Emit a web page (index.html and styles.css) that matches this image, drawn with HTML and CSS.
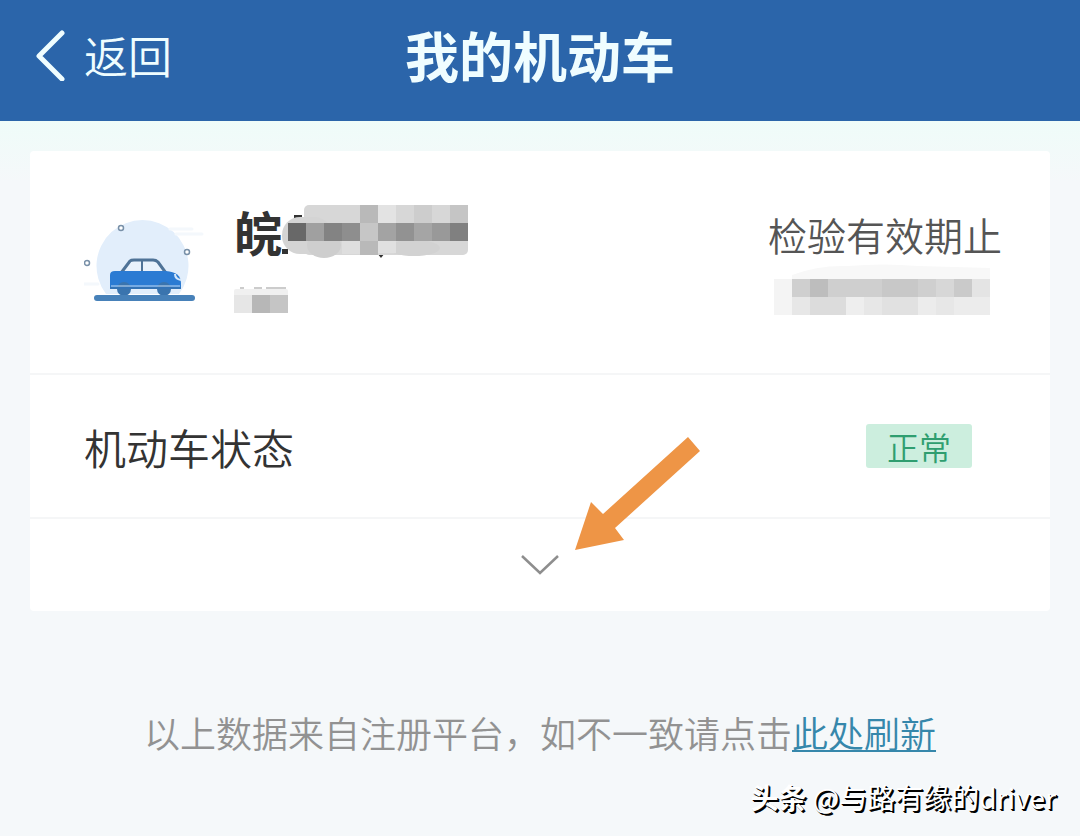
FILE: index.html
```html
<!DOCTYPE html>
<html lang="zh-CN">
<head>
  <meta charset="UTF-8" />
  <meta name="viewport" content="width=device-width, initial-scale=1" />
  <title>我的机动车</title>
  <link rel="stylesheet" href="styles.css">
</head>
<body>
  <header class="topbar">
    <a href="#" class="back">
      <svg class="back-icon" viewBox="0 0 32 52" aria-hidden="true">
        <path d="M28 4 L5 27 L28 50" fill="none" stroke="currentColor" stroke-width="5" stroke-linecap="round" stroke-linejoin="round" />
      </svg>
      <span>返回</span>
    </a>
    <h1 class="title">我的机动车</h1>
  </header>

  <main class="content">
    <section class="card" aria-label="机动车信息">
      <div class="vehicle">
        <svg class="car" viewBox="0 0 120 90" aria-hidden="true">
          <path d="M22 77 A46 46 0 1 1 95 77 Z" fill="#e2eefb" />
          <path d="M86 12 H108 M92 17 H118 M0 67 H14" stroke="#f4f8fc" stroke-width="3" stroke-linecap="round" />
          <g fill="#fff" stroke="#7890a8" stroke-width="1.5">
            <circle cx="37" cy="11" r="2.5" />
            <circle cx="103" cy="35" r="2.5" />
            <circle cx="3" cy="46" r="2.5" />
          </g>
          <path d="M37 56 L46 44 Q47 43 50 43 H69 Q72 43 74 45 L82 56 Z" fill="#e9f2fc" stroke="#4f7397" stroke-width="3" />
          <path d="M58 43 V56" stroke="#4f7397" stroke-width="2" />
          <path d="M26 71 V58 Q26 54 31 54 H82 Q97 55 97 66 V71 Z" fill="#2b7bd3" />
          <path d="M91 57 Q91 62 97 63" fill="none" stroke="#d5e8fb" stroke-width="2" />
          <circle cx="40" cy="72" r="7" fill="#3a74ae" />
          <circle cx="80" cy="72" r="7" fill="#3a74ae" />
          <path d="M26 71 H97" stroke="#3473b5" stroke-width="2" />
          <path d="M27 69 H96" stroke="#c3dcf5" stroke-width="1" />
          <path d="M13 81 H108" stroke="#4781b9" stroke-width="6" stroke-linecap="round" />
        </svg>

        <div class="vehicle-name">
          <div class="plate">
            <span>皖</span>
            <svg class="plate-mask" viewBox="0 0 188 54" aria-hidden="true">
              <path d="M0 44 H6 V49 H0 Z M95 48 H103 L99 53 Z M12 10 H20 V13 H12 Z" fill="#333" />
              <rect x="22" y="0" width="164" height="50" rx="5" fill="#d7d7d7" />
              <rect x="0" y="12" width="50" height="37" rx="18" fill="#d4d4d4" />
              <ellipse cx="42" cy="40" rx="17" ry="13" fill="#cecece" />
              <ellipse cx="132" cy="43" rx="26" ry="8" fill="#d2d2d2" />
              <rect x="78" y="0" width="18" height="50" fill="#b9b9b9" />
              <rect x="96" y="0" width="18" height="18" fill="#e3e3e3" />
              <rect x="132" y="0" width="18" height="18" fill="#cdcdcd" />
              <rect x="168" y="0" width="18" height="18" fill="#c5c5c5" />
              <rect x="6" y="18" width="18" height="18" fill="#686868" />
              <rect x="24" y="18" width="18" height="18" fill="#a0a0a0" />
              <rect x="42" y="18" width="18" height="18" fill="#838383" />
              <rect x="60" y="18" width="18" height="18" fill="#8e8e8e" />
              <rect x="78" y="18" width="18" height="18" fill="#c6c6c6" />
              <rect x="96" y="18" width="18" height="18" fill="#a3a3a3" />
              <rect x="114" y="18" width="18" height="18" fill="#929292" />
              <rect x="132" y="18" width="18" height="18" fill="#a5a5a5" />
              <rect x="150" y="18" width="18" height="18" fill="#999" />
              <rect x="168" y="18" width="18" height="18" fill="#808080" />
              <rect x="60" y="36" width="18" height="13" fill="#dedede" />
              <rect x="96" y="36" width="18" height="12" fill="#e0e0e0" />
            </svg>
          </div>
          <svg class="type-mask" viewBox="0 0 54 26" aria-hidden="true">
            <path d="M6 1 H10 M20 1 H28 M32 1 H52" stroke="#999" stroke-width="1" />
            <rect x="0" y="2" width="54" height="24" rx="2" fill="#f0f0f0" />
            <rect x="0" y="8" width="18" height="18" fill="#e6e6e6" />
            <rect x="18" y="8" width="18" height="18" fill="#b7b7b7" />
            <rect x="36" y="8" width="18" height="18" fill="#c5c5c5" />
          </svg>
        </div>

        <div class="inspection">
          <span class="inspection-label">检验有效期止</span>
          <svg class="date-mask" viewBox="0 0 232 52" aria-hidden="true">
            <path d="M24 12 Q50 2 80 3 Q115 0 150 3 L222 5 V18 H24 Z" fill="#f8f8f8" />
            <rect x="6" y="16" width="18" height="36" fill="#f4f4f4" />
            <rect x="24" y="16" width="198" height="18" fill="#cfcfcf" />
            <rect x="42" y="16" width="18" height="18" fill="#bdbdbd" />
            <rect x="114" y="16" width="36" height="18" fill="#c8c8c8" />
            <rect x="168" y="16" width="18" height="18" fill="#d7d7d7" />
            <rect x="186" y="16" width="18" height="18" fill="#cacaca" />
            <rect x="204" y="16" width="18" height="18" fill="#e4e4e4" />
            <rect x="24" y="34" width="198" height="18" fill="#e7e7e7" />
            <rect x="42" y="34" width="36" height="18" fill="#dcdcdc" />
            <rect x="78" y="34" width="18" height="18" fill="#eee" />
            <rect x="114" y="34" width="36" height="18" fill="#e1e1e1" />
            <rect x="150" y="34" width="18" height="18" fill="#ececec" />
            <rect x="186" y="34" width="36" height="18" fill="#ececec" />
          </svg>
        </div>
      </div>

      <div class="status">
        <span class="status-label">机动车状态</span>
        <span class="status-badge">正常</span>
      </div>

      <div class="more">
        <button type="button" class="more-button" aria-label="展开">
          <svg class="chevron" viewBox="0 0 38 20" aria-hidden="true">
            <path d="M1 1 L19 18 L37 1" fill="none" stroke="#8e8e8e" stroke-width="2.5" />
          </svg>
        </button>
        <svg class="arrow" viewBox="0 0 126 114" aria-hidden="true">
          <path d="M113 0 L125 14 L40 91 L49 103 L0 113 L16 65 L28 77 Z" fill="#ee9546" />
        </svg>
      </div>
    </section>

    <p class="note">以上数据来自注册平台，如不一致请点击<a href="#" class="refresh">此处刷新</a></p>
  </main>

  <footer class="credit"><span class="credit-brand">头条</span> @与路有缘的driver</footer>
</body>
</html>
```
FILE: styles.css
```css
/* Reset & base */
*, *::before, *::after {
  box-sizing: border-box;
}
body {
  margin: 0;
  min-height: 100vh;
  font-family: "Noto Sans CJK SC", "Noto Sans", sans-serif;
  font-weight: 350;
  background: #f5f8fa;
  color: #333;
}
svg {
  display: block;
  flex: none;
}

/* Top bar */
.topbar {
  display: grid;
  grid-template-columns: 1fr auto 1fr;
  align-items: center;
  padding: 15px 34px 26px;
  background: #2b65aa;
  color: #effdff;
}
.back {
  display: flex;
  align-items: center;
  gap: 18px;
  color: inherit;
  font-size: 44px;
  line-height: 64px;
  text-decoration: none;
}
.back-icon {
  width: 32px;
  height: 52px;
}
.title {
  margin: 0;
  font-size: 54px;
  font-weight: 700;
  line-height: 80px;
}

/* Card */
.content {
  padding: 30px 30px 0;
  background: linear-gradient(#effcf9, #f5f8fa 60px);
}
.card {
  background: #fff;
  border-radius: 4px;
}
.vehicle {
  display: flex;
  align-items: flex-start;
  padding: 48px 48px 54px 54px;
}
.car {
  width: 120px;
  height: 90px;
  margin: 18px 30px 0 0;
}
.plate {
  display: flex;
  align-items: flex-start;
  font-size: 48px;
  font-weight: 700;
  line-height: 64px;
}
.plate-mask {
  width: 188px;
  height: 54px;
  margin-top: 6px;
}
.type-mask {
  width: 54px;
  height: 26px;
  margin-top: 24px;
}
.inspection {
  margin-left: auto;
  color: #555;
}
.inspection-label {
  display: block;
  font-size: 39px;
  line-height: 58px;
  padding-top: 6px;
}
.date-mask {
  width: 232px;
  height: 52px;
  margin-bottom: 4px;
}

/* Status row */
.status {
  display: flex;
  align-items: center;
  justify-content: space-between;
  min-height: 146px;
  padding: 0 78px 0 54px;
  border-top: 2px solid #f5f6f7;
  border-bottom: 2px solid #f5f6f7;
}
.status-label {
  font-size: 42px;
}
.status-badge {
  padding: 0 21px;
  border-radius: 3px;
  background: #cceede;
  color: #2f9e70;
  font-size: 32px;
  line-height: 44px;
}

/* Expand row */
.more {
  position: relative;
}
.more-button {
  display: flex;
  align-items: center;
  justify-content: center;
  width: 100%;
  height: 92px;
  padding: 0;
  border: 0;
  background: none;
  cursor: pointer;
}
.chevron {
  width: 38px;
  height: 20px;
}
.arrow {
  position: absolute;
  left: calc(50% + 35px);
  bottom: 60px;
  width: 126px;
  height: 114px;
  pointer-events: none;
}

/* Note and credit */
.note {
  margin: 94px 0 0;
  color: #929292;
  font-size: 36px;
  line-height: 54px;
  text-align: center;
}
.refresh {
  color: #3687ab;
  text-decoration-thickness: 2px;
  text-underline-offset: 2px;
}
.credit {
  padding: 18px 24px 0 0;
  color: #fff;
  font-size: 28px;
  font-weight: 400;
  line-height: 40px;
  text-align: right;
  text-shadow: 1px 1px 0 #000, 2px 2px 0 #000;
}
.credit-brand {
  font-weight: 700;
}
```
